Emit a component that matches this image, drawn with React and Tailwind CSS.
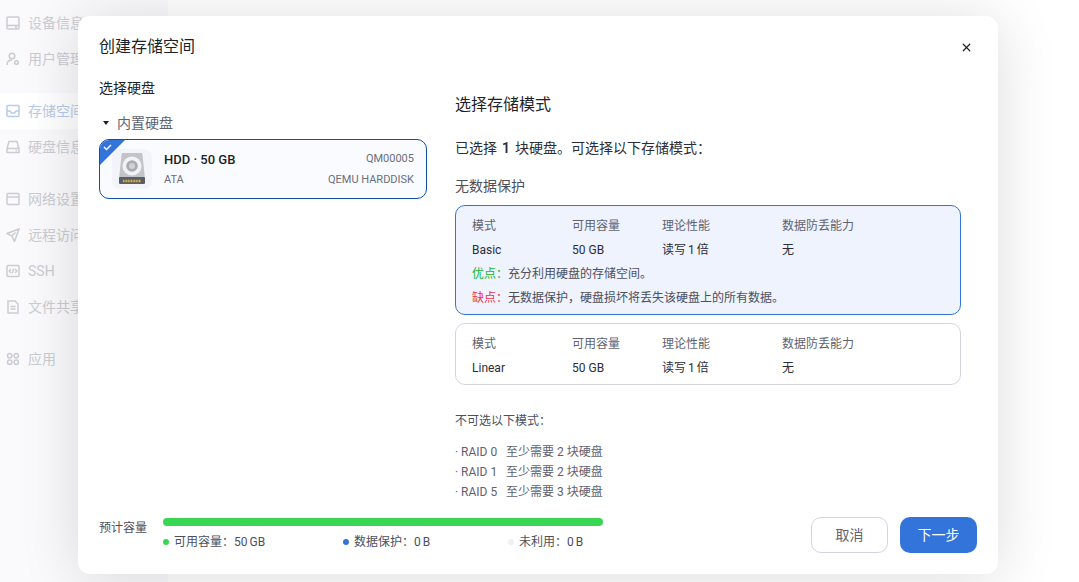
import React from 'react';
import { X } from 'lucide-react';

const FONT = 'font-["Roboto","Noto_Sans_CJK_SC",sans-serif]';

const Ico = ({ children }) => (
  <svg width="14" height="14" viewBox="0 0 14 14" fill="none" stroke="currentColor" strokeWidth="1.5" className="shrink-0">
    {children}
  </svg>
);

const navGroups = [
  [
    { label: '设备信息', icon: <><rect x="1" y="1" width="12" height="12" rx="1" /><path d="M1 9.5h12M9 11.2h2" /></> },
    { label: '用户管理', icon: <><circle cx="6" cy="4" r="2.8" /><path d="M1 13c0-3 2-5 5-5" /><circle cx="10.5" cy="10.5" r="1.8" /></> },
  ],
  [
    { label: '存储空间', active: true, icon: <><rect x="1" y="1.5" width="12" height="11" rx="1" /><path d="M1 7h3l1.5 2h3L10 7h3" /></> },
    { label: '硬盘信息', icon: <><path d="M3 1.5h8l2 7v4H1v-4zM1 8.5h12" /><path d="M9.5 10.5h1.5" /></> },
  ],
  [
    { label: '网络设置', icon: <><rect x="1" y="1.5" width="12" height="11" rx="1" /><path d="M1 5h12" /></> },
    { label: '远程访问', icon: <path d="M13 1 1 5.5l5 2.5 2.5 5.5zM6 8l3.5-3.5" /> },
    { label: 'SSH', icon: <><rect x="1" y="1.5" width="12" height="11" rx="1" /><path d="M5 5 3.2 7 5 9M9 5l1.8 2L9 9M7.8 4.8 6.2 9.2" /></> },
    { label: '文件共享', icon: <><path d="M2 1h7l3 3v9H2z" /><path d="M4.5 6.5h5M4.5 9h5" /></> },
  ],
  [
    { label: '应用', icon: <><circle cx="3.7" cy="3.7" r="2.2" /><circle cx="10.3" cy="3.7" r="2.2" /><circle cx="3.7" cy="10.3" r="2.2" /><circle cx="10.3" cy="10.3" r="2.2" /></> },
  ],
];

const Sidebar = () => (
  <aside className="w-[168px] h-full bg-[#fafafd] pt-[5px] flex flex-col gap-4">
    {navGroups.map((group, i) => (
      <div key={i} className="flex flex-col">
        {group.map((item) => (
          <div
            key={item.label}
            className={`h-9 pl-[6px] flex items-center gap-2 text-sm whitespace-nowrap ${item.active ? 'bg-white text-[#b7cbea]' : 'text-[#cbccd2]'}`}
          >
            <Ico>{item.icon}</Ico>
            <span>{item.label}</span>
          </div>
        ))}
      </div>
    ))}
  </aside>
);

const DiskIcon = () => (
  <svg width="30" height="34" viewBox="0 0 30 34">
    <path d="M6 1h18a1.500 1.500 0 0 1 1.500 1.400L28 27H2L4.500 2.400A1.500 1.500 0 0 1 6 1z" fill="#c2c4c9" />
    <circle cx="15" cy="14" r="9.500" fill="#f1f2f3" />
    <circle cx="15" cy="14" r="5.800" fill="#a8abb2" />
    <circle cx="15" cy="14" r="3" fill="#cfd1d5" />
    <rect x="2" y="25" width="26" height="7" rx="1" fill="#5b5e65" />
    <path d="M6 29h18" stroke="#e0b93f" strokeWidth="2.500" strokeDasharray="1 0.600" />
  </svg>
);

const DiskCard = () => (
  <div className="relative h-[60px] rounded-[10px] border border-[#0f4fa8] bg-[#fafbfe] overflow-hidden flex items-center pl-[12px] pr-[12px]">
    <svg width="25" height="25" viewBox="0 0 25 25" className="absolute left-0 top-0">
      <path d="M0 0h25L0 25z" fill="#3374db" />
      <path d="M4 7l2.500 2.500L11 5" fill="none" stroke="#fff" strokeWidth="1.500" />
    </svg>
    <div className="w-10 h-10 rounded-[8px] bg-[#f3f4f9] flex items-center justify-center shrink-0">
      <DiskIcon />
    </div>
    <div className="ml-[12px] flex-1 flex flex-col gap-[5px] pt-[2px]">
      <div className="flex justify-between items-center h-[16px]">
        <span className="text-[13px] font-medium text-[#1d1f29]">HDD · 50 GB</span>
        <span className="text-[11px] text-[#6b6e7b]">QM00005</span>
      </div>
      <div className="flex justify-between items-center h-[16px]">
        <span className="text-[11px] text-[#6b6e7b]">ATA</span>
        <span className="text-[11px] text-[#6b6e7b]">QEMU HARDDISK</span>
      </div>
    </div>
  </div>
);

const ModeRows = ({ name }) => (
  <div className="grid grid-cols-[100px_90px_120px_1fr] auto-rows-[24px] items-center text-xs">
    <span className="text-[#5f6270]">模式</span>
    <span className="text-[#5f6270]">可用容量</span>
    <span className="text-[#5f6270]">理论性能</span>
    <span className="text-[#5f6270]">数据防丢能力</span>
    <span className="text-[#2b2d38]">{name}</span>
    <span className="text-[#2b2d38]">50 GB</span>
    <span className="text-[#2b2d38] [word-spacing:-1px]">读写 1 倍</span>
    <span className="text-[#2b2d38]">无</span>
  </div>
);

const Legend = ({ dot, label, value, className }) => (
  <div className={`flex items-center text-xs text-[#4c4f5c] ${className}`}>
    <span className={`w-[6px] h-[6px] rounded-full mr-[5px] ${dot}`} />
    <span className="[word-spacing:-1px]">{label}：{value}</span>
  </div>
);

export default function App() {
  return (
    <div className={`${FONT} relative w-[1079px] h-[582px] overflow-hidden bg-white`}>
      <Sidebar />

      <div className="absolute left-[78px] top-4 w-[920px] h-[558px] rounded-xl bg-white shadow-[0_4px_60px_rgba(0,0,0,0.14)] flex flex-col">
        <header className="h-[60px] shrink-0 pl-[21px] pr-6 flex items-center justify-between">
          <h1 className="text-base text-[#1d1f29] mt-px">创建存储空间</h1>
          <X size={13} strokeWidth={2.2} className="text-[#1d1f29] mt-[2px] mr-px" />
        </header>

        <div className="h-[421px] shrink-0 overflow-hidden pl-[21px] flex gap-7">
          <section className="w-[328px] shrink-0">
            <div className="h-6 flex items-center text-sm text-[#1d1f29]">选择硬盘</div>
            <div className="mt-[11px] h-6 flex items-center text-sm text-[#5f6270]">
              <span className="w-0 h-0 ml-[4px] mr-[8px] border-x-[3px] border-x-transparent border-t-[4px] border-t-[#1d1f29]" />
              内置硬盘
            </div>
            <div className="mt-1">
              <DiskCard />
            </div>
          </section>

          <section className="w-[506px] shrink-0 pt-[17px] text-[#2b2d38]">
            <h2 className="h-6 flex items-center text-base font-normal text-[#1d1f29]">选择存储模式</h2>
            <p className="mt-[19px] h-6 flex items-center text-sm text-[#2b2d38]">
              已选择<b className="font-semibold mx-[5px]">1</b>块硬盘。可选择以下存储模式：
            </p>
            <h3 className="mt-[14px] h-6 flex items-center text-sm font-normal text-[#4c4f5c]">无数据保护</h3>

            <div className="mt-[7px] h-[110px] rounded-[10px] border border-[#3374db] bg-[#eff3fd] px-4 pt-2">
              <ModeRows name="Basic" />
              <div className="h-6 flex items-center text-xs text-[#4c4f5c]">
                <span className="text-[#14b52f]">优点：</span>充分利用硬盘的存储空间。
              </div>
              <div className="h-6 flex items-center text-xs text-[#4c4f5c]">
                <span className="text-[#f0304f]">缺点：</span>无数据保护，硬盘损坏将丢失该硬盘上的所有数据。
              </div>
            </div>

            <div className="mt-2 h-[62px] rounded-[10px] border border-[#d3d4e0] px-4 pt-2">
              <ModeRows name="Linear" />
            </div>

            <p className="mt-[26px] h-5 flex items-center text-xs text-[#4c4f5c]">不可选以下模式：</p>
            <ul className="mt-[11px] text-xs text-[#5f6270]">
              <li className="h-5 flex items-center whitespace-pre">· RAID 0   至少需要 2 块硬盘</li>
              <li className="h-5 flex items-center whitespace-pre">· RAID 1   至少需要 2 块硬盘</li>
              <li className="h-5 flex items-center whitespace-pre">· RAID 5   至少需要 3 块硬盘</li>
            </ul>
          </section>
        </div>

        <footer className="pl-[21px] pr-[21px] pt-5 flex items-start">
          <span className="w-16 mt-[3px] text-xs text-[#4c4f5c] shrink-0">预计容量</span>
          <div className="w-[440px] mt-px">
            <div className="h-2 rounded-full bg-[#38d652]" />
            <div className="mt-[8px] flex">
              <Legend dot="bg-[#38d652]" label="可用容量" value="50 GB" className="w-[180px]" />
              <Legend dot="bg-[#3374db]" label="数据保护" value="0 B" className="w-[165px]" />
              <Legend dot="bg-[#eff0f5]" label="未利用" value="0 B" />
            </div>
          </div>
          <div className="ml-auto flex gap-3">
            <button className="w-[77px] h-9 rounded-[10px] border border-[#d3d4e0] bg-white text-sm text-[#5f6270]">取消</button>
            <button className="w-[77px] h-9 rounded-[10px] bg-[#3374db] text-sm text-white">下一步</button>
          </div>
        </footer>
      </div>
    </div>
  );
}
